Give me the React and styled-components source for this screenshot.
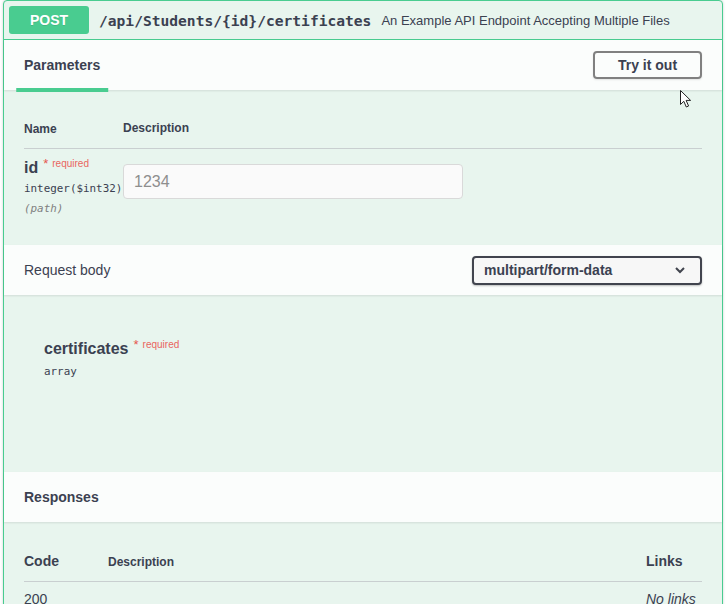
import React from 'react';
import styled, { createGlobalStyle } from 'styled-components';

const ink = '#3b4151';
const tint = '#e8f5ee';
const sans = '"Liberation Sans", Arial, sans-serif';
const mono = '"DejaVu Sans Mono", "Liberation Mono", monospace';

const App = () => {
  return (
    <>
      <GlobalStyle />
      <Page>
        <OpBlock>
          <Summary>
            <Method>POST</Method>
            <Path>/api/Students/{'{id}'}/certificates</Path>
            <SummaryText>An Example API Endpoint Accepting Multiple Files</SummaryText>
          </Summary>

          <SectionHeader>
            <Tab>Parameters</Tab>
            <TryButton>Try it out</TryButton>
            <Cursor width="13" height="20" viewBox="0 0 13 20">
              <path d="M1.5 1.5 L1.5 15.5 L4.8 12.3 L7.3 18 L9.6 17 L7.1 11.4 L11.6 11.4 Z" fill="#fff" stroke="#222" strokeWidth="1" strokeLinejoin="miter" />
            </Cursor>
          </SectionHeader>

          <ParamsBody>
            <Table>
              <HeadRow>
                <NameCol><ColTitle>Name</ColTitle></NameCol>
                <ColTitle>Description</ColTitle>
              </HeadRow>
              <ParamRow>
                <NameCol>
                  <ParamName>
                    id<Required>*</Required><RequiredNote>required</RequiredNote>
                  </ParamName>
                  <ParamType>integer($int32)</ParamType>
                  <ParamIn>(path)</ParamIn>
                </NameCol>
                <Input placeholder="1234" />
              </ParamRow>
            </Table>
          </ParamsBody>

          <SectionHeader>
            <PlainTitle>Request body</PlainTitle>
            <Select>
              <span>multipart/form-data</span>
              <svg width="12" height="8" viewBox="0 0 12 8">
                <path d="M2 2 L6 6 L10 2" fill="none" stroke="#41444e" strokeWidth="2" />
              </svg>
            </Select>
          </SectionHeader>

          <RequestBody>
            <ParamName>
              certificates<Required>*</Required><RequiredNote>required</RequiredNote>
            </ParamName>
            <ParamType $gap={2}>array</ParamType>
          </RequestBody>

          <SectionHeader>
            <BoldTitle>Responses</BoldTitle>
          </SectionHeader>

          <ResponsesBody>
            <RespHead>
              <CodeCell><BigTitle>Code</BigTitle></CodeCell>
              <DescCell><ColTitle>Description</ColTitle></DescCell>
              <LinksCell><BigTitle>Links</BigTitle></LinksCell>
            </RespHead>
            <RespRow>
              <CodeCell>200</CodeCell>
              <DescCell />
              <LinksCell><NoLinks>No links</NoLinks></LinksCell>
            </RespRow>
          </ResponsesBody>
        </OpBlock>
      </Page>
    </>
  );
};

export default App;

const GlobalStyle = createGlobalStyle`
  html, body {
    margin: 0;
    padding: 0;
    background: #fff;
    font-family: ${sans};
    color: ${ink};
  }
  body {
    height: 604px;
    overflow: hidden;
  }
`;

const Page = styled.div`
  padding: 0 3px;
`;

const OpBlock = styled.div`
  border: 1px solid #49cc90;
  border-radius: 4px;
  background: ${tint};
  box-shadow: 0 0 3px rgba(0, 0, 0, 0.19);
`;

const Summary = styled.div`
  display: flex;
  align-items: center;
  padding: 5px;
  border-bottom: 1px solid #49cc90;
`;

const Method = styled.div`
  min-width: 80px;
  height: 28px;
  display: flex;
  align-items: center;
  justify-content: center;
  border-radius: 3px;
  background: #49cc90;
  color: #fff;
  font-size: 14px;
  font-weight: 700;
  text-shadow: 0 1px 0 rgba(0, 0, 0, 0.1);
`;

const Path = styled.span`
  padding: 0 10px;
  font-family: ${mono};
  font-size: 14.6px;
  font-weight: 700;
  color: ${ink};
`;

const SummaryText = styled.span`
  font-size: 13px;
  color: ${ink};
`;

const SectionHeader = styled.div`
  position: relative;
  display: flex;
  align-items: center;
  justify-content: space-between;
  min-height: 50px;
  padding: 0 20px;
  box-sizing: border-box;
  background: #fbfdfc;
  box-shadow: 0 1px 2px rgba(0, 0, 0, 0.1);
`;

const Tab = styled.div`
  position: relative;
  font-size: 14px;
  font-weight: 700;
  color: ${ink};

  &::after {
    content: '';
    position: absolute;
    left: 50%;
    bottom: -19px;
    width: 120%;
    height: 4px;
    transform: translateX(-50%);
    background: #49cc90;
  }
`;

const TryButton = styled.button`
  width: 109px;
  height: 28px;
  border: 2px solid #808080;
  border-radius: 4px;
  background: transparent;
  font-family: ${sans};
  font-size: 14px;
  font-weight: 700;
  color: ${ink};
  box-shadow: 0 1px 2px rgba(0, 0, 0, 0.1);
`;

const Cursor = styled.svg`
  position: absolute;
  left: 675px;
  top: 49px;
`;

const ParamsBody = styled.div`
  padding: 20px 20px 18px;
`;

const Table = styled.div`
  display: flex;
  flex-direction: column;
`;

const HeadRow = styled.div`
  display: flex;
  align-items: center;
  padding: 9px 0 11px;
  border-bottom: 1px solid #c9cfd0;
`;

const NameCol = styled.div`
  width: 99px;
  flex-shrink: 0;
`;

const ColTitle = styled.span`
  font-size: 12px;
  font-weight: 700;
  color: ${ink};
`;

const ParamRow = styled.div`
  display: flex;
  align-items: flex-start;
  padding: 10px 0 8px;
`;

const ParamName = styled.div`
  font-size: 16px;
  font-weight: 700;
  color: ${ink};
  line-height: 18px;
`;

const Required = styled.span`
  position: relative;
  top: -5px;
  padding: 0 4px 0 5px;
  font-size: 13px;
  font-weight: 400;
  color: #e5554e;
`;

const RequiredNote = styled.span`
  position: relative;
  top: -6px;
  font-size: 10px;
  font-weight: 400;
  color: #e8655e;
`;

const ParamType = styled.div`
  margin-top: ${(p) => p.$gap || 0}px;
  font-family: ${mono};
  font-size: 10.9px;
  line-height: 20px;
  color: ${ink};
`;

const ParamIn = styled.div`
  font-family: ${mono};
  font-size: 10.9px;
  font-style: italic;
  line-height: 20px;
  color: #808080;
`;

const Input = styled.input`
  width: 340px;
  height: 35px;
  margin-top: 5px;
  padding: 0 10px;
  box-sizing: border-box;
  border: 1px solid #d9d9d9;
  border-radius: 4px;
  background: #fafafa;
  font-family: ${sans};
  font-size: 16px;
  outline: none;

  &::placeholder {
    color: #8e8e8e;
  }
`;

const PlainTitle = styled.span`
  font-size: 14px;
  color: ${ink};
`;

const BoldTitle = styled.span`
  font-size: 14px;
  font-weight: 700;
  color: ${ink};
`;

const Select = styled.div`
  display: flex;
  align-items: center;
  justify-content: space-between;
  width: 230px;
  height: 29px;
  box-sizing: border-box;
  padding: 0 14px 0 10px;
  border: 2px solid #41444e;
  border-radius: 4px;
  background: #f7f7f7;
  box-shadow: 0 1px 2px rgba(0, 0, 0, 0.25);
  font-size: 14px;
  font-weight: 700;
  color: ${ink};
`;

const RequestBody = styled.div`
  height: 177px;
  box-sizing: border-box;
  padding: 45px 40px 0;
`;

const ResponsesBody = styled.div`
  padding: 30px 20px 0;
`;

const RespHead = styled.div`
  display: flex;
  align-items: center;
  padding: 0 0 11px;
  border-bottom: 1px solid #c9cfd0;
`;

const RespRow = styled.div`
  display: flex;
  align-items: center;
  padding: 9px 0;
  font-size: 14px;
`;

const CodeCell = styled.div`
  width: 84px;
  flex-shrink: 0;
`;

const DescCell = styled.div`
  flex: 1;
`;

const LinksCell = styled.div`
  width: 56px;
  flex-shrink: 0;
`;

const BigTitle = styled.span`
  font-size: 14px;
  font-weight: 700;
  color: ${ink};
`;

const NoLinks = styled.span`
  font-style: italic;
  color: ${ink};
`;
